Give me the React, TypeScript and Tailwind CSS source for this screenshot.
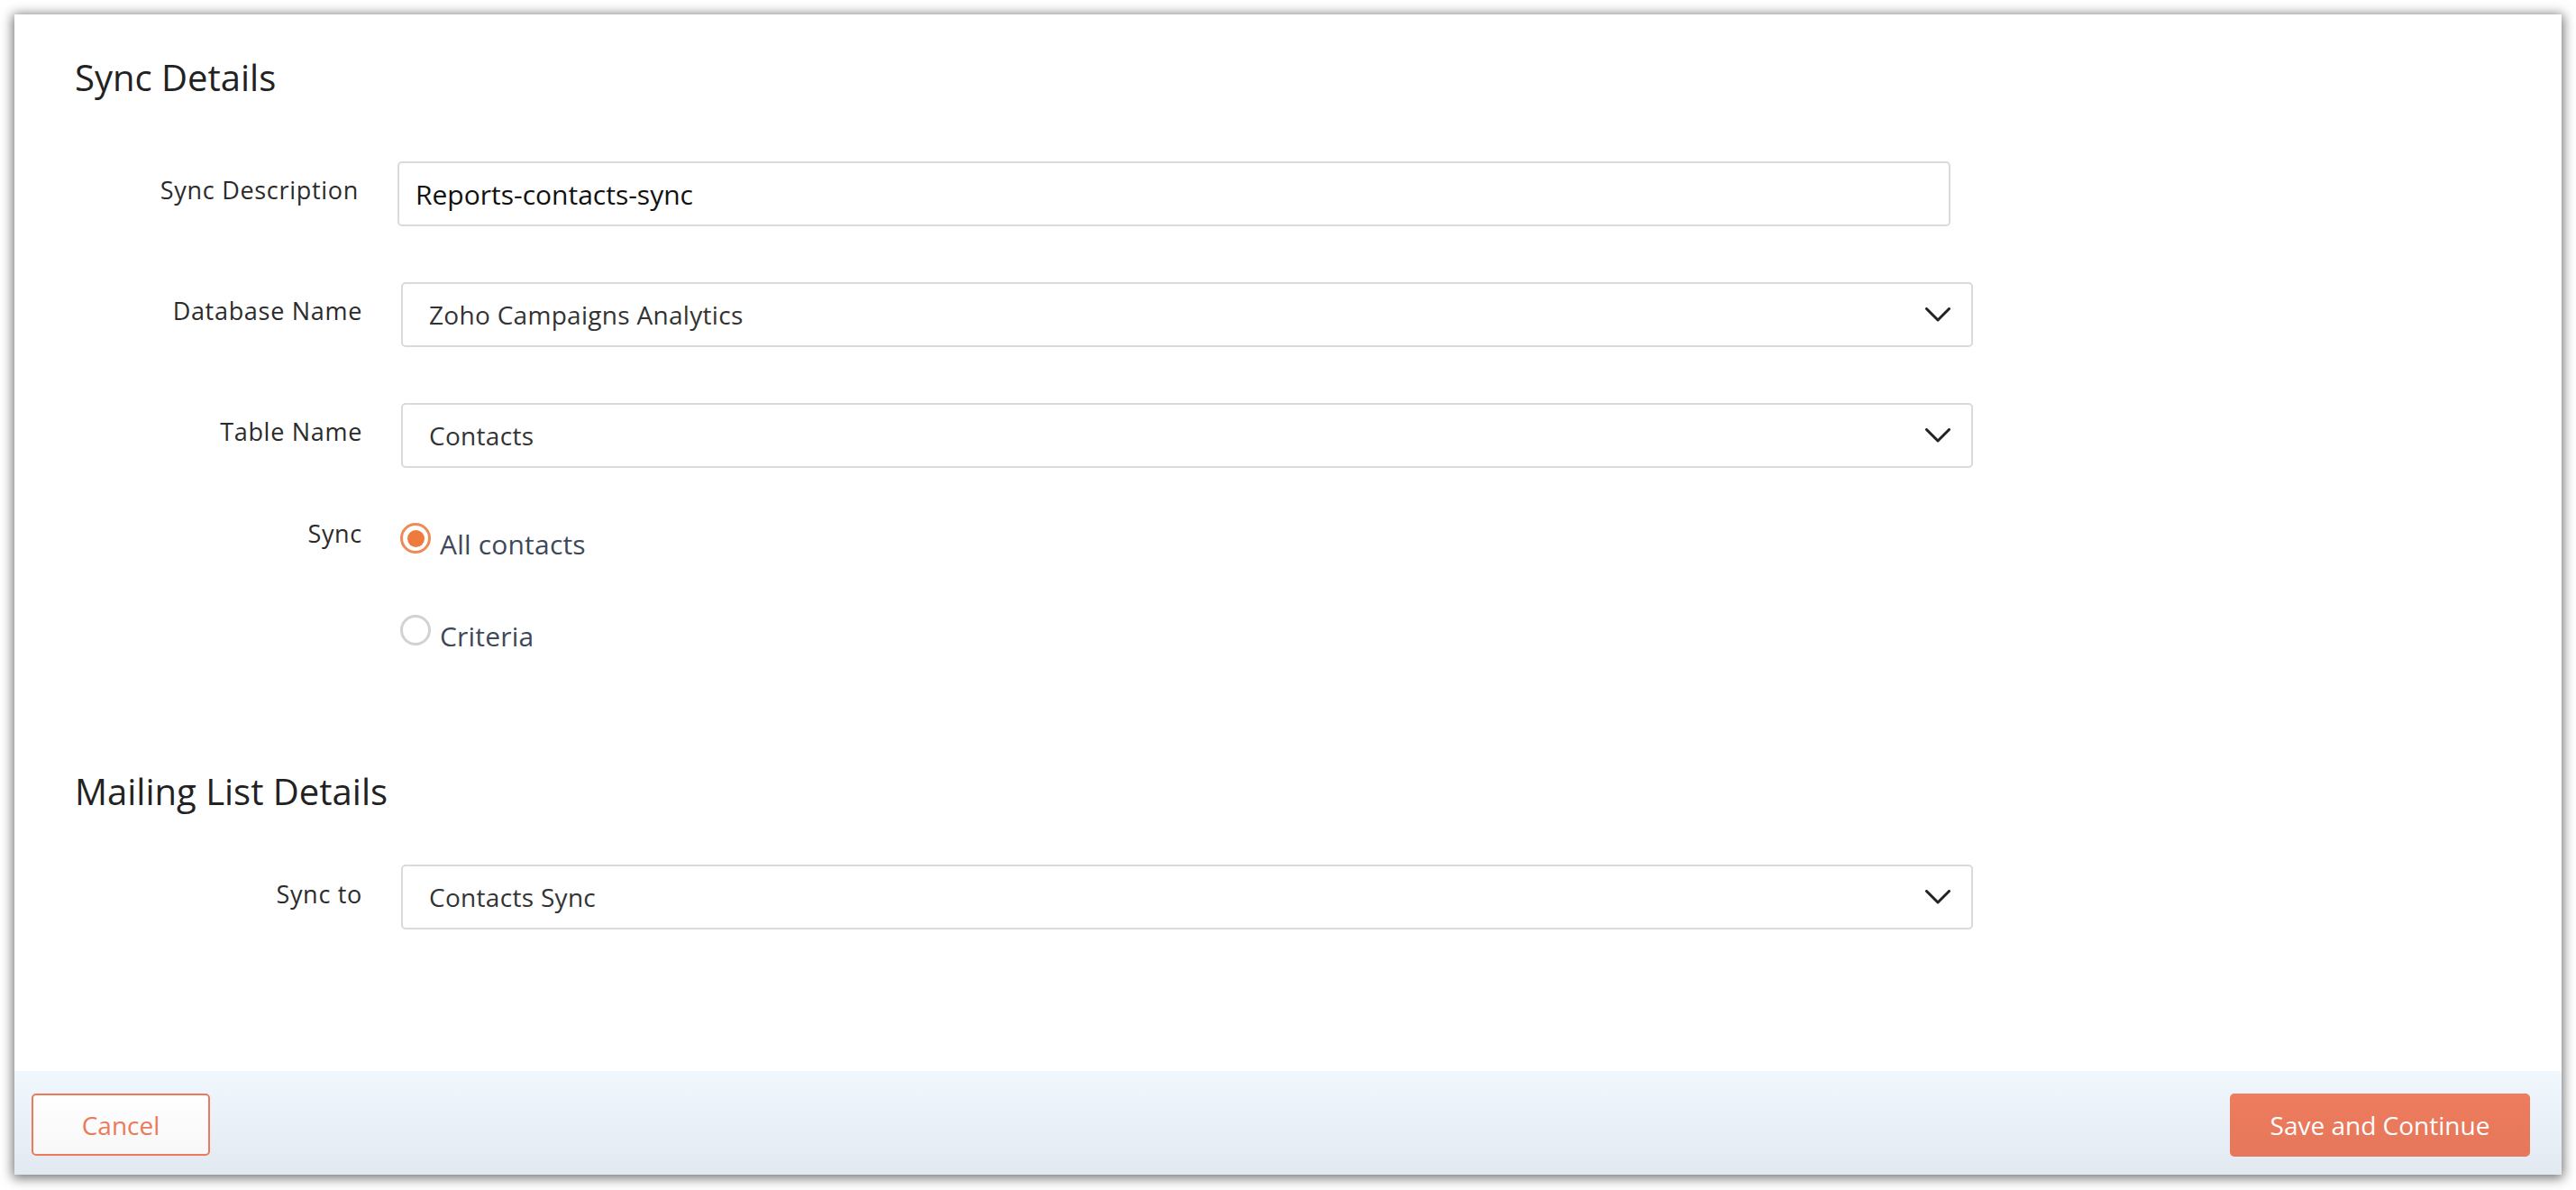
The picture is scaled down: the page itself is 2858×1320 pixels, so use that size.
import React from "react";

function Chevron() {
  return (
    <svg width="28" height="16" viewBox="0 0 28 16" fill="none" className="shrink-0">
      <polyline points="1.5,1.5 14,14 26.5,1.5" stroke="#222" strokeWidth="3" strokeLinecap="round" strokeLinejoin="round" />
    </svg>
  );
}

function SelectBox({ value }: { value: string }) {
  return (
    <div className="flex h-[72px] w-[1744px] items-center justify-between rounded-[5px] border-2 border-[#dadada] bg-white pl-[29px] pr-[23px]">
      <span className="text-[28px] tracking-[0.3px] text-[#333]">{value}</span>
      <Chevron />
    </div>
  );
}

function Radio({ checked, label }: { checked: boolean; label: string }) {
  return (
    <div className="flex items-start gap-[10px]">
      {checked ? (
        <div className="flex h-[34px] w-[34px] items-center justify-center rounded-full border-[3px] border-[#f08a55] bg-white">
          <div className="h-[19px] w-[19px] rounded-full bg-[#ef7a3d]" />
        </div>
      ) : (
        <div className="h-[34px] w-[34px] rounded-full border-[3px] border-[#d2d2d2] bg-white" />
      )}
      <span className="text-[30px] leading-[48px] tracking-[0.2px] text-[#3e4958]">{label}</span>
    </div>
  );
}

export default function App() {
  return (
    <div className="min-h-[1320px] w-full bg-white pt-[16px] font-['Open_Sans',sans-serif]">
      <div className="mx-[16px] bg-white shadow-[0_2px_12px_2px_rgba(0,0,0,0.55)]">
        <div className="pt-[50px]">
          <h2 className="pl-[67px] text-[40px] leading-[40px] font-normal text-[#222]">Sync Details</h2>

          <div className="mt-[73px] flex items-start gap-[43px]">
            <label className="mt-[14px] w-[382px] text-right text-[27px] leading-[36px] tracking-[0.7px] text-[#2b2b2b]">
              Sync Description
            </label>
            <div className="flex h-[72px] w-[1723px] items-center rounded-[5px] border-2 border-[#dadada] bg-white pl-[18px]">
              <span className="text-[30px] text-[#111]">Reports-contacts-sync</span>
            </div>
          </div>

          <div className="mt-[62px] flex items-start gap-[43px]">
            <label className="mt-[14px] w-[386px] text-right text-[27px] leading-[36px] tracking-[0.7px] text-[#2b2b2b]">
              Database Name
            </label>
            <SelectBox value="Zoho Campaigns Analytics" />
          </div>

          <div className="mt-[62px] flex items-start gap-[43px]">
            <label className="mt-[14px] w-[386px] text-right text-[27px] leading-[36px] tracking-[0.7px] text-[#2b2b2b]">
              Table Name
            </label>
            <SelectBox value="Contacts" />
          </div>

          <div className="mt-[61px] flex items-start gap-[42px]">
            <label className="w-[386px] text-right text-[27px] leading-[24px] tracking-[0.7px] text-[#2b2b2b]">Sync</label>
            <div className="flex flex-col gap-[54px]">
              <Radio checked label="All contacts" />
              <Radio checked={false} label="Criteria" />
            </div>
          </div>

          <h2 className="mt-[128px] pl-[67px] text-[40px] leading-[40px] font-normal text-[#222]">Mailing List Details</h2>

          <div className="mt-[61px] flex items-start gap-[43px]">
            <label className="mt-[15px] w-[386px] text-right text-[27px] leading-[36px] tracking-[0.7px] text-[#2b2b2b]">
              Sync to
            </label>
            <SelectBox value="Contacts Sync" />
          </div>
        </div>

        <div className="mt-[157px] flex h-[115px] items-start justify-between bg-gradient-to-b from-[#f0f7fd] to-[#e2e9f1] pl-[19px] pr-[35px] pt-[25px]">
          <button className="flex h-[69px] w-[198px] items-center justify-center rounded-[5px] border-2 border-[#ec7a5a] bg-gradient-to-b from-white to-[#f7f7f7] text-[28px] text-[#ec7a5a]">
            Cancel
          </button>
          <button className="flex h-[70px] w-[333px] items-center justify-center rounded-[5px] bg-gradient-to-b from-[#ee7c5e] to-[#e6775a] text-[28px] text-white">
            Save and Continue
          </button>
        </div>
      </div>
    </div>
  );
}
